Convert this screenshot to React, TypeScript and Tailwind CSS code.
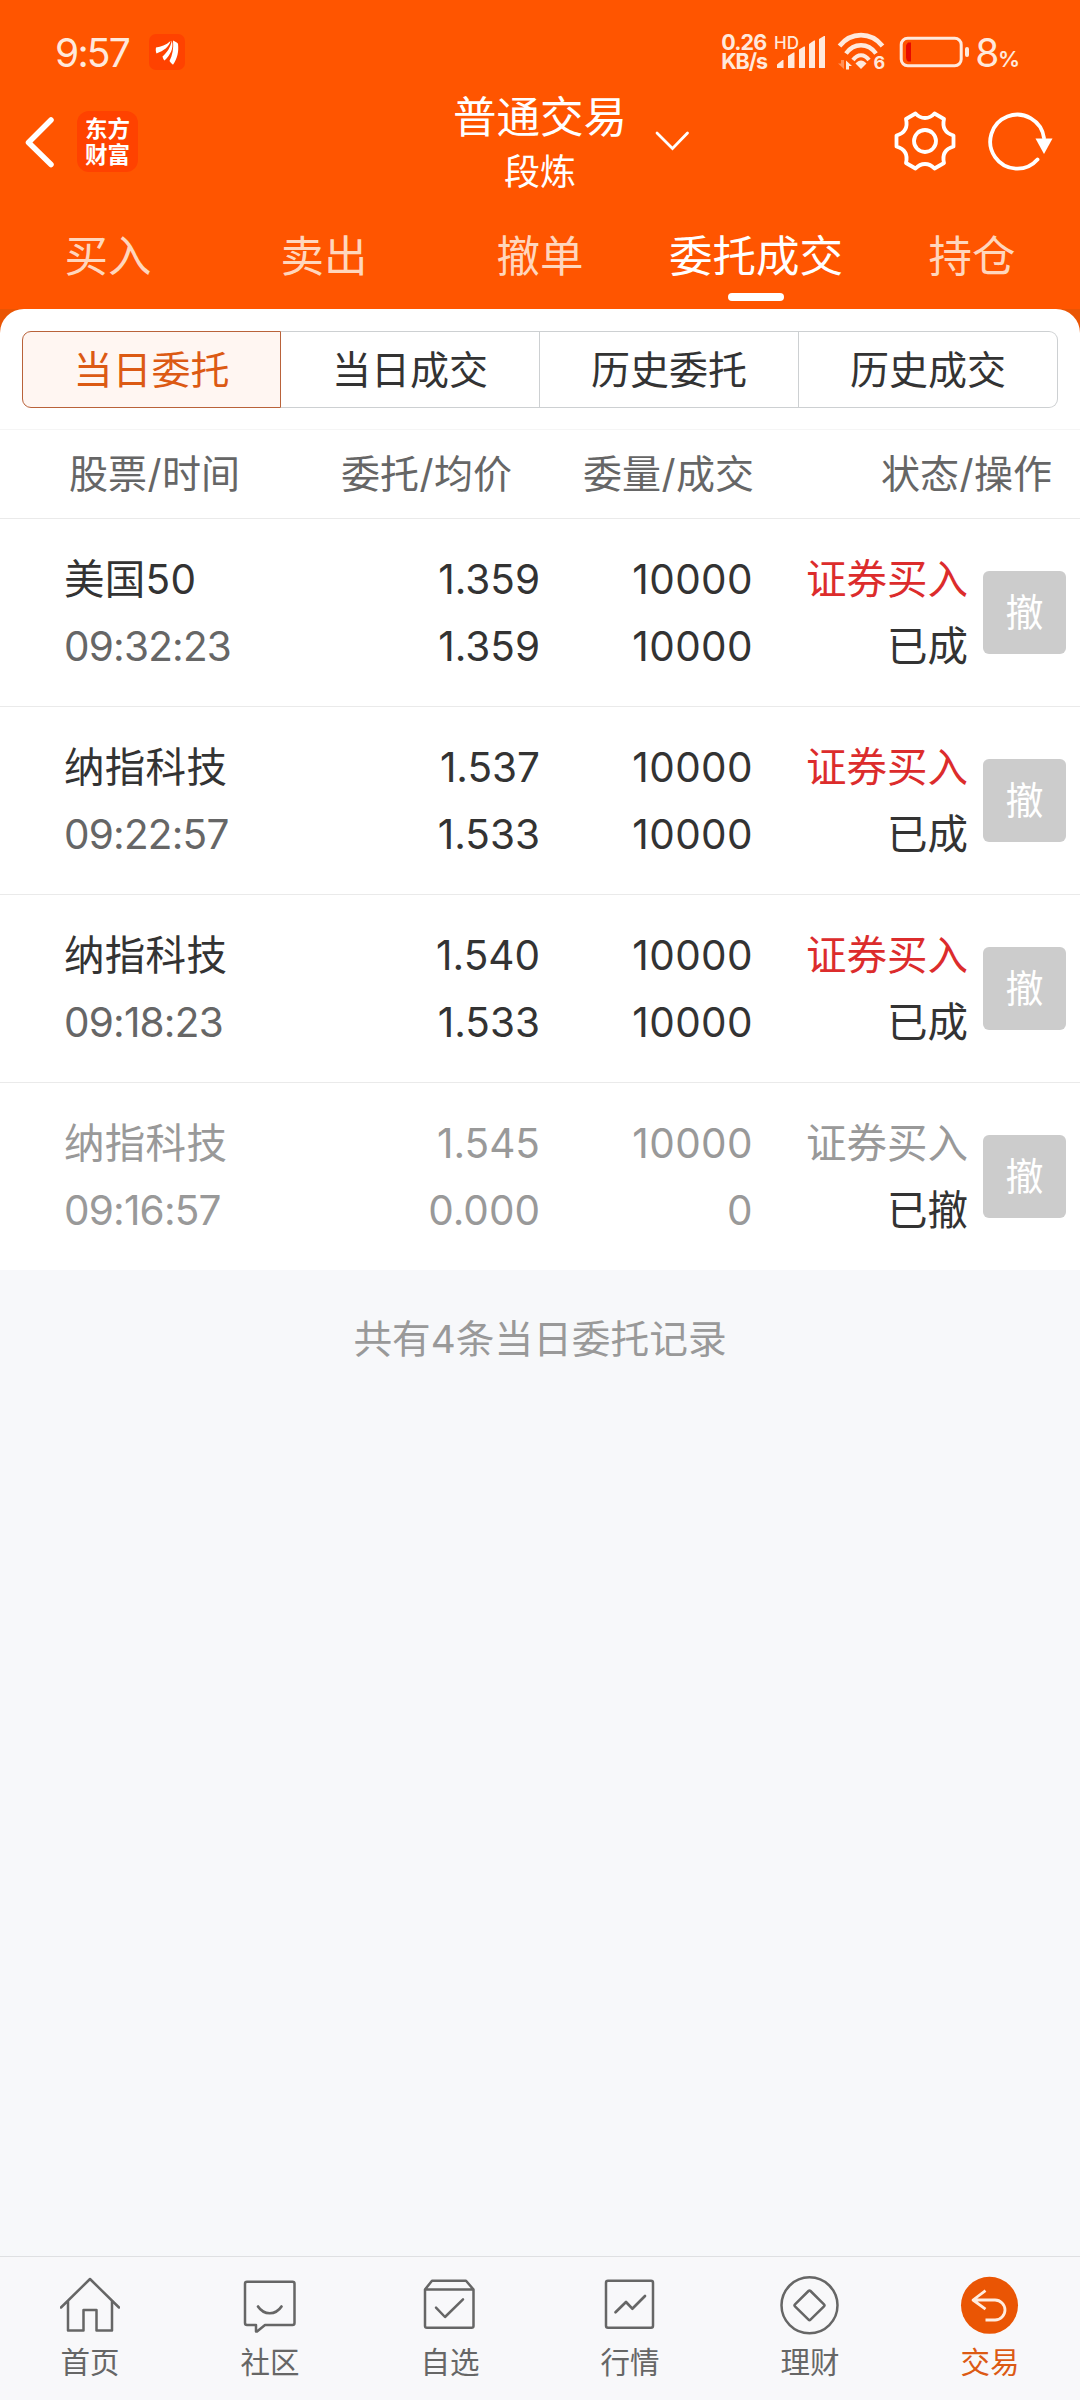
import React, { useState } from "react";

type Order = {
  name: string;
  time: string;
  price: string;
  avgPrice: string;
  amount: string;
  filled: string;
  side: string;
  status: string;
  cancelled?: boolean;
};

const NAV_TABS = ["买入", "卖出", "撤单", "委托成交", "持仓"];
const FILTERS = ["当日委托", "当日成交", "历史委托", "历史成交"];

const ORDERS: Order[] = [
  { name: "美国50", time: "09:32:23", price: "1.359", avgPrice: "1.359", amount: "10000", filled: "10000", side: "证券买入", status: "已成" },
  { name: "纳指科技", time: "09:22:57", price: "1.537", avgPrice: "1.533", amount: "10000", filled: "10000", side: "证券买入", status: "已成" },
  { name: "纳指科技", time: "09:18:23", price: "1.540", avgPrice: "1.533", amount: "10000", filled: "10000", side: "证券买入", status: "已成" },
  { name: "纳指科技", time: "09:16:57", price: "1.545", avgPrice: "0.000", amount: "10000", filled: "0", side: "证券买入", status: "已撤", cancelled: true },
];

function StatusBar() {
  return (
    <div className="flex h-[104px] items-center pl-[55px] pr-[61px] text-[#ffe9dc]">
      <span className="w-[94px] text-[39px] leading-none tracking-[-1.8px]">9:57</span>
      <svg width="36" height="36" viewBox="0 0 36 36">
        <rect width="36" height="36" rx="7" fill="#ff4200" />
        <g fill="#fff">
          <path d="M7 13.5c5-.5 10-2.500 14.500-6.500-1.500 6-6.500 9.500-14 12.500-.8-2-.9-4-.5-6z" />
          <path d="M13.500 22.500c4.500-4 8-9 9.300-16 2.200 8-1.500 14.500-7.300 20-1-1-1.700-2.500-2-4z" />
          <path d="M20.500 27c3-6 4.300-12.500 3.500-20.500 2 1 4 2 5 3.200 1 8-.7 14.800-5 21-1.500-1-2.600-2.300-3.500-3.700z" />
        </g>
      </svg>
      <div className="ml-auto flex items-center">
        <div className="w-[54px] text-[21.500px] font-bold leading-[19px] tracking-[-0.9px]">
          <div>0.26</div>
          <div className="tracking-[-1.1px]">KB/s</div>
        </div>
        <svg className="overflow-visible" width="54" height="36" viewBox="0 0 54 36" fill="currentColor">
          <text x="-1" y="15" fontSize="17" fontWeight="500" textLength="25" lengthAdjust="spacingAndGlyphs">HD</text>
          <path d="M2 34v-3.500l5.500-4.500h1v8zM13 34V22l5.500-3.500h1V34zM24 34V15.500l5-3h1V34zM34 34V10l5-3.500h1V34zM44 34V5l5-3h1v32z" />
        </svg>
        <svg className="ml-[9px] overflow-visible" width="48" height="38" viewBox="0 0 48 38" fill="none" stroke="currentColor">
          <path d="M1.500 13C13-1.500 33-1.500 44.500 13" strokeWidth="4.600" />
          <path d="M8 20.500c8-11 22-11 30 0" strokeWidth="4.400" />
          <path d="M15 27c4.500-6.500 11.500-6.500 16 0" strokeWidth="4" />
          <path d="M17.500 30.500c3.500-4 7.500-4 11 0L23 36z" fill="currentColor" stroke="none" />
          <path d="M6 27v9l-6-5.500h3V27z" fill="currentColor" stroke="none" opacity=".4" />
          <path d="M8 36.500v-9l6 5.500h-3v3.500z" fill="currentColor" stroke="none" />
          <text x="35.500" y="36" fontSize="18" fontWeight="700" fill="currentColor" stroke="none">6</text>
        </svg>
        <svg className="ml-[13px]" width="72" height="32" viewBox="0 0 72 32">
          <rect x="2.200" y="2.200" width="60" height="27.600" rx="6.500" fill="none" stroke="currentColor" strokeWidth="3" />
          <rect x="66" y="11" width="4" height="10" rx="2" fill="currentColor" />
          <path d="M9 6.500h3v19H9q-2-2-2-4v-11q0-2 2-4z" fill="#e60a00" />
        </svg>
        <div className="ml-[4px] flex items-baseline leading-none">
          <span className="text-[39px] tracking-[-1.5px]">8</span>
          <span className="text-[22px] font-semibold tracking-[-1px]">%</span>
        </div>
      </div>
    </div>
  );
}

function TitleBar() {
  return (
    <div className="grid h-[106px] grid-cols-[390px_1fr_390px] text-white">
      <div className="flex items-start pl-[24px] pt-[7px]">
        <svg className="mt-[5px]" width="32" height="52" viewBox="0 0 32 52" fill="none" stroke="currentColor" strokeWidth="5.500" strokeLinecap="round" strokeLinejoin="round">
          <path d="M27 4L4.500 26.500 27 48.500" />
        </svg>
        <div className="ml-[21px] flex h-[61px] w-[61px] flex-col items-center justify-center rounded-[12px] bg-[#ff4200] pb-[3px] font-['Noto_Sans_CJK_SC','Noto_Sans',sans-serif] text-[22.500px] font-bold leading-[26.500px]">
          <span>东方</span>
          <span>财富</span>
        </div>
      </div>
      <div className="relative flex flex-col items-center">
        <div className="mt-[-13px] text-[43.500px] leading-[52px]">普通交易</div>
        <div className="mt-[6px] text-[36px] leading-[46px]">段炼</div>
        <svg className="absolute left-[265px] top-[27px]" width="36" height="20" viewBox="0 0 36 20" fill="none" stroke="currentColor" strokeWidth="2.800" strokeLinecap="round">
          <path d="M2 2L17.500 17.500 32.500 2" />
        </svg>
      </div>
      <div className="flex items-start justify-end pr-[26px] pt-[5px]">
        <svg width="64" height="64" viewBox="-32 -32 64 64" fill="none" stroke="currentColor" strokeWidth="3.800" strokeLinejoin="round">
          <circle r="11" />
          <path d="M-9.500-27.500C-4-21.500 4-21.500 9.500-27.500L19-22C17-13.500 20-8 28.500-5.500V5.500C20 8 17 13.500 19 22L9.500 27.500C4 21.500-4 21.500-9.500 27.500L-19 22C-17 13.500-20 8-28.500 5.500V-5.500C-20-8-17-13.500-19-22Z" />
        </svg>
        <svg className="ml-[29px]" width="68" height="64" viewBox="0 0 68 64" fill="none" stroke="currentColor" strokeWidth="3.800">
          <path d="M51.500 50.500A27 27 0 1 1 58 29" strokeLinecap="round" />
          <path d="M49.500 29.500h17L58 45z" fill="currentColor" stroke="none" />
        </svg>
      </div>
    </div>
  );
}

function OrderRow({ order, last }: { order: Order; last: boolean }) {
  const main = order.cancelled ? "text-[#999]" : "text-[#333]";
  const sub = order.cancelled ? "text-[#999]" : "text-[#666]";
  return (
    <div className={`grid grid-cols-[260px_280px_213px_215px_1fr] items-center text-[40.500px] leading-[67px] ${last ? "h-[187px]" : "h-[188px] border-b border-[#eaeaea]"}`}>
      <div className="pl-[64px]">
        <div className={`whitespace-nowrap tracking-[0.3px] ${main}`}>{order.name}</div>
        <div className={`whitespace-nowrap tracking-[-0.8px] ${sub}`}>{order.time}</div>
      </div>
      <div className={`text-right ${main}`}>
        <div>{order.price}</div>
        <div>{order.avgPrice}</div>
      </div>
      <div className={`text-right tracking-[0.4px] ${main}`}>
        <div>{order.amount}</div>
        <div>{order.filled}</div>
      </div>
      <div className="text-right">
        <div className={order.cancelled ? "text-[#999]" : "text-[#dc2c2c]"}>{order.side}</div>
        <div className="text-[#333]">{order.status}</div>
      </div>
      <button className="ml-[15px] flex h-[83px] w-[83px] items-center justify-center rounded-[6px] bg-[#ccc] text-[38px] text-white">撤</button>
    </div>
  );
}

const NAV_ITEMS: { label: string; icon: React.ReactNode }[] = [
  {
    label: "首页",
    icon: <path d="M1 32.500L30 4l29 28.500M8 26v29.500h15.500V35h13v20.500H52V26" />,
  },
  {
    label: "社区",
    icon: (
      <>
        <path d="M7 6.700h45.500q2 0 2 2v39.300q0 2-2 2H25l-8 6.500h-1V50H7q-2 0-2-2V8.700q0-2 2-2z" />
        <path d="M18 31.500c6 9 17.500 9 23.500 0" strokeWidth="2.700" />
      </>
    ),
  },
  {
    label: "自选",
    icon: (
      <>
        <path d="M5 14.500L12 5.700h34l7.500 8.800V51q0 1.800-2 1.800H7q-2 0-2-1.800zM5 14.500h48.500" />
        <path d="M16 32.700l9 9.300 18-17.700" />
      </>
    ),
  },
  {
    label: "行情",
    icon: (
      <>
        <rect x="6" y="5.700" width="47" height="47" rx="2" />
        <path d="M15.500 37.300L26 27l6.300 6.700L45 21" strokeWidth="2.700" />
      </>
    ),
  },
  {
    label: "理财",
    icon: (
      <>
        <circle cx="29.500" cy="30.300" r="28" />
        <path d="M28.500 16q1-1 2 0l13.500 13.300q1 1 0 2L30.500 44.700q-1 1-2 0L15 31.300q-1-1 0-2z" />
      </>
    ),
  },
  {
    label: "交易",
    icon: (
      <>
        <circle cx="29.500" cy="30.300" r="28.500" fill="#ea5504" stroke="none" />
        <path d="M25.500 15.700L13 25l12.500 9.200M13 25h22a10 10 0 0 1 0 20h-9.500" stroke="#ffece0" strokeWidth="2.800" strokeLinecap="butt" />
      </>
    ),
  },
];

export default function App() {
  const [tab, setTab] = useState(3);
  const [filter, setFilter] = useState(0);

  return (
    <div className="flex h-[2400px] w-[1080px] flex-col overflow-hidden bg-[#f7f8fa] font-['Inter','Noto_Sans_CJK_SC',sans-serif]">
      <header className="bg-[#ff5500]">
        <StatusBar />
        <TitleBar />
        <nav className="grid h-[99px] grid-cols-5">
          {NAV_TABS.map((label, i) => (
            <button
              key={label}
              onClick={() => setTab(i)}
              className={`flex flex-col items-center whitespace-nowrap pt-[18px] text-[43.500px] leading-[56px] ${tab === i ? "text-white" : "text-[#ffd6bd]"}`}
            >
              {label}
              {tab === i && <span className="mt-[9px] h-[8px] w-[56px] rounded-full bg-white" />}
            </button>
          ))}
        </nav>
      </header>

      <div className="bg-[#ea5504]">
        <div className="rounded-t-[24px] bg-white px-[22px] pb-[21px] pt-[22px]">
          <div className="grid h-[77px] grid-cols-4">
            {FILTERS.map((label, i) => (
              <button
                key={label}
                onClick={() => setFilter(i)}
                className={`border text-[39px] leading-[74px] ${i === 0 ? "rounded-l-[9px]" : "border-l-0"} ${i === FILTERS.length - 1 ? "rounded-r-[9px]" : ""} ${filter === i ? "border-[#b9623a] bg-[#fff6f2] text-[#dc5a14]" : "border-[#cdd0d2] text-[#333]"}`}
              >
                {label}
              </button>
            ))}
          </div>
        </div>
      </div>

      <div className="bg-white">
        <div className="grid h-[90px] grid-cols-[260px_252px_242px_298px] items-center border-y border-t-[#f5f5f5] border-b-[#eaeaea] text-[39px] leading-[60px] text-[#666]">
          <div className="pl-[69px]">股票<span className="px-[0.5px]">/</span>时间</div>
          <div className="text-right">委托<span className="px-[0.5px]">/</span>均价</div>
          <div className="text-right">委量<span className="px-[0.5px]">/</span>成交</div>
          <div className="text-right">状态<span className="px-[0.5px]">/</span>操作</div>
        </div>
        {ORDERS.map((order, i) => (
          <OrderRow key={order.time} order={order} last={i === ORDERS.length - 1} />
        ))}
      </div>

      <p className="pt-[39px] text-center text-[38.700px] leading-[60px] text-[#999]">共有4条当日委托记录</p>

      <footer className="mt-auto grid h-[144px] grid-cols-6 border-t border-[#dfe0e2] bg-[#f8f8fa]">
        {NAV_ITEMS.map((item, i) => {
          const active = i === NAV_ITEMS.length - 1;
          return (
            <div key={item.label} className={`flex flex-col items-center pt-[18px] ${active ? "text-[#dc5a14]" : "text-[#666]"}`}>
              <svg width="60" height="60" viewBox="0 0 60 60" fill="none" stroke="currentColor" strokeWidth="2.500" strokeLinecap="round" strokeLinejoin="round">
                {item.icon}
              </svg>
              <span className="mt-[7px] text-[29.500px] leading-[40px]">{item.label}</span>
            </div>
          );
        })}
      </footer>
    </div>
  );
}
